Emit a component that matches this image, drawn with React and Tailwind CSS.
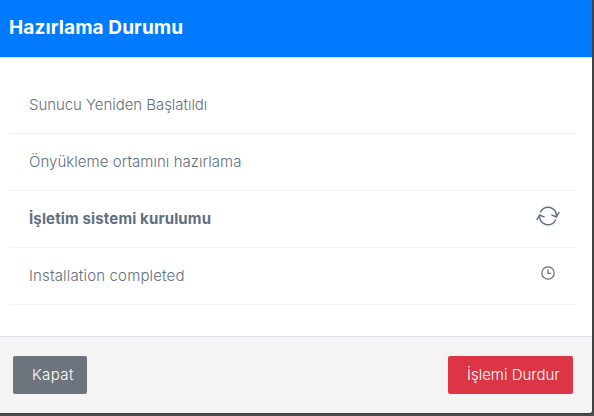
const steps = [
  { id: 'reboot', label: 'Sunucu Yeniden Başlatıldı', status: 'done', text: 'font-light tracking-[-0.05px]' },
  { id: 'boot', label: 'Önyükleme ortamını hazırlama', status: 'done', text: 'font-light tracking-[0.05px]' },
  { id: 'os', label: 'İşletim sistemi kurulumu', status: 'running', text: 'font-bold tracking-[0.14px]' },
  { id: 'finish', label: 'Installation completed', status: 'pending', text: 'font-light tracking-[0.16px]' },
];

function RefreshIcon() {
  return (
    <svg width="24" height="20" viewBox="0 0 24 20" fill="none" stroke="currentColor" strokeWidth="1.4">
      <path d="M4.2 6.6A8.4 8.4 0 0 1 20.4 10.4" />
      <path d="M19.8 13.4A8.4 8.4 0 0 1 3.6 9.6" />
      <path d="M15.4 8.8L20.4 11L23.2 6" />
      <path d="M8.6 11.2L3.6 9L0.8 14" />
    </svg>
  );
}

function ClockIcon() {
  return (
    <svg width="14" height="14" viewBox="0 0 14 14" fill="none" stroke="currentColor" strokeWidth="1.25">
      <circle cx="7" cy="7" r="6.2" />
      <path d="M7 3.2V7.4H10.2" />
    </svg>
  );
}

export default function App() {
  return (
    <div className="h-[416px] w-[594px] overflow-hidden bg-[#504e50] font-['Inter','Noto_Sans',sans-serif]">
      <div className="flex h-[413px] w-[592px] flex-col overflow-hidden rounded-br-[3px] bg-white shadow-[0_0_3px_rgba(0,0,0,0.6)]">
        <div className="flex h-[58px] shrink-0 items-center border-b border-[#dee2e6] bg-[#007bff] px-[9px] pb-px">
          <h1 className="whitespace-nowrap text-[19px] font-bold tracking-[0.1px] text-white">Hazırlama Durumu</h1>
        </div>

        <ul className="ml-[9px] mr-4 flex flex-1 flex-col pt-[19px] text-[#5f7080]">
          {steps.map((step) => (
            <li key={step.id} className="flex h-[57px] items-center justify-between border-b border-[#f1f2f3] pl-5 pr-4">
              <span className={`whitespace-nowrap text-[15px] leading-6 ${step.text}`}>{step.label}</span>
              {step.status === 'running' && (
                <span className="flex pb-[6px]">
                  <RefreshIcon />
                </span>
              )}
              {step.status === 'pending' && (
                <span className="mr-[5px] flex pb-[6px]">
                  <ClockIcon />
                </span>
              )}
            </li>
          ))}
        </ul>

        <div className="flex h-[77px] shrink-0 items-center justify-between border-t border-[#dee2e6] bg-[#f4f4f4] pl-[13px] pr-[19px]">
          <button className="h-[38px] w-[74px] whitespace-nowrap rounded-xs bg-[#6c757d] pl-[19px] text-left text-[15px] font-light tracking-[0.4px] text-white">
            Kapat
          </button>
          <button className="h-[38px] w-[125px] whitespace-nowrap rounded-xs bg-[#dc3545] pl-[19px] text-left text-[15px] font-light text-white">
            İşlemi Durdur
          </button>
        </div>
      </div>
    </div>
  );
}
